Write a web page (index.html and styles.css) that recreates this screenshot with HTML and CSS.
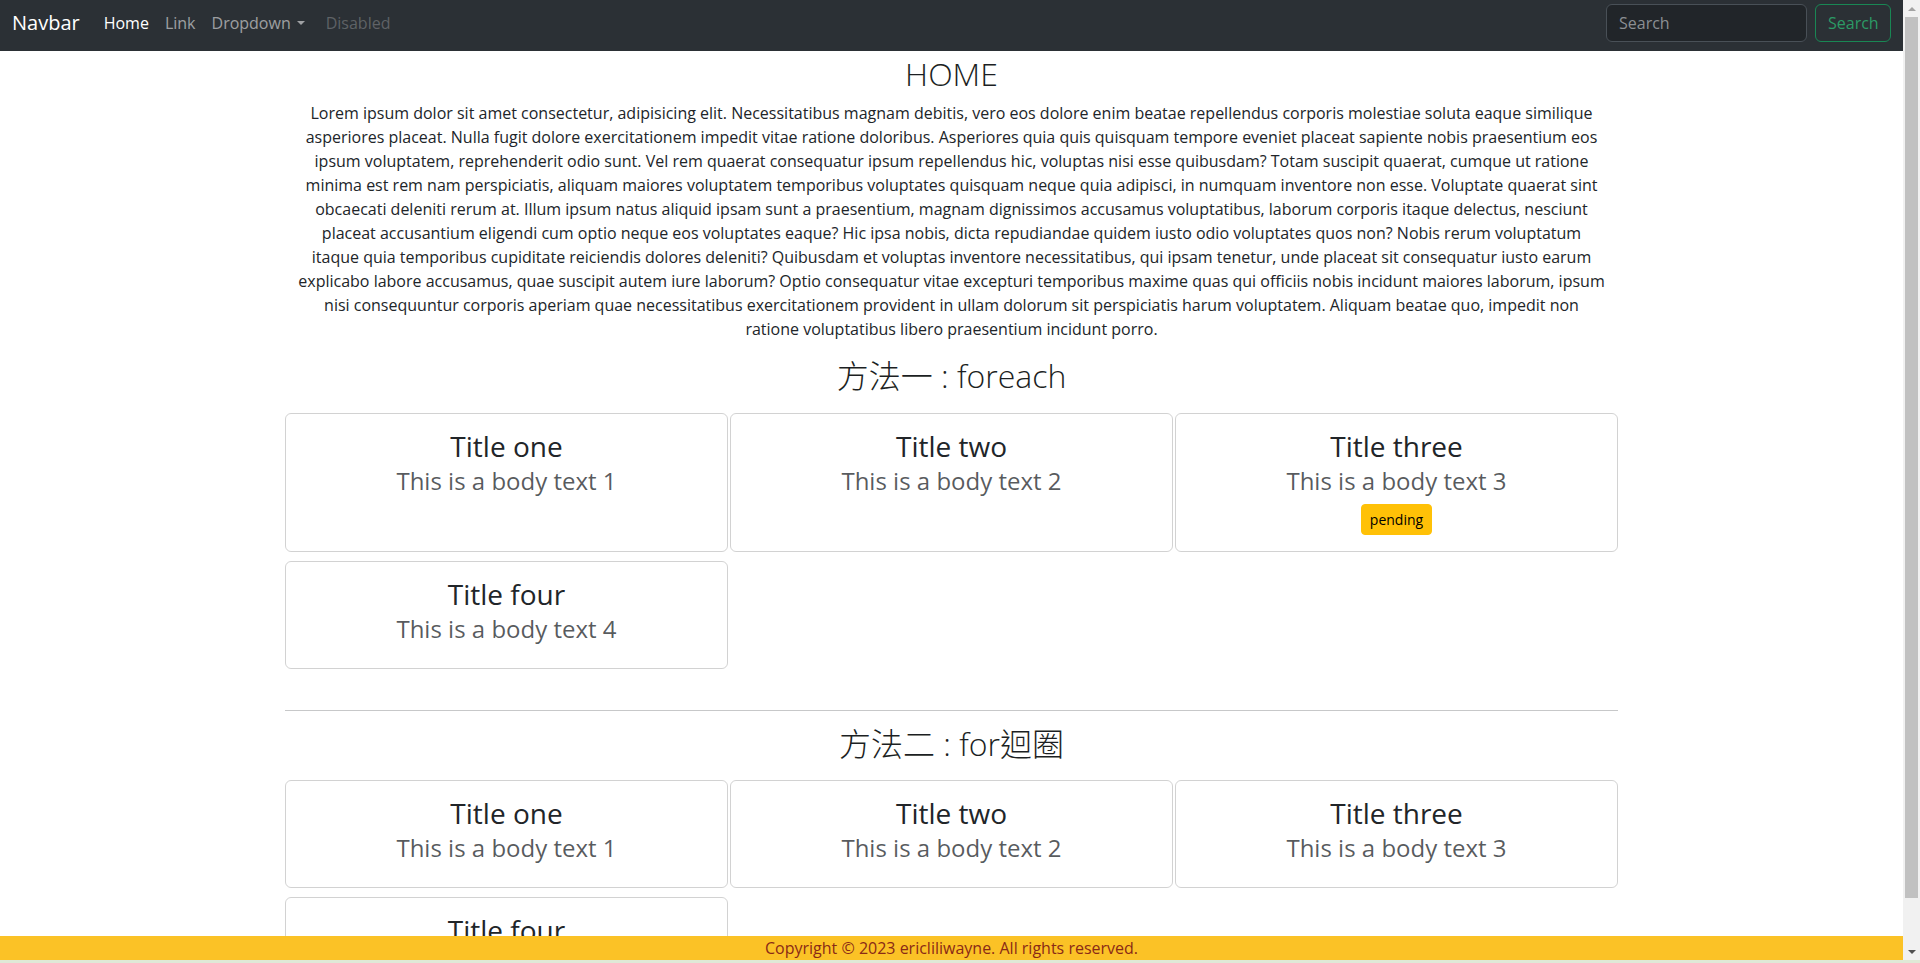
FILE: index.html
```html
<!DOCTYPE html>
<html lang="zh-Hant">
<head>
<meta charset="utf-8">
<title>Home</title>
<link rel="stylesheet" href="styles.css">
</head>
<body>
<nav class="navbar">
  <a class="brand" href="#">Navbar</a>
  <ul class="nav-links">
    <li><a class="nav-link active" href="#">Home</a></li>
    <li><a class="nav-link" href="#">Link</a></li>
    <li><a class="nav-link dropdown" href="#">Dropdown</a></li>
    <li><span class="nav-link disabled">Disabled</span></li>
  </ul>
  <form class="search">
    <input class="search-input" type="search" placeholder="Search">
    <button class="search-btn" type="button">Search</button>
  </form>
</nav>

<main class="container">
  <h2 class="page-title">HOME</h2>
  <p class="intro">Lorem ipsum dolor sit amet consectetur, adipisicing elit. Necessitatibus magnam debitis, vero eos dolore enim beatae repellendus corporis molestiae soluta eaque similique asperiores placeat. Nulla fugit dolore exercitationem impedit vitae ratione doloribus. Asperiores quia quis quisquam tempore eveniet placeat sapiente nobis praesentium eos ipsum voluptatem, reprehenderit odio sunt. Vel rem quaerat consequatur ipsum repellendus hic, voluptas nisi esse quibusdam? Totam suscipit quaerat, cumque ut ratione minima est rem nam perspiciatis, aliquam maiores voluptatem temporibus voluptates quisquam neque quia adipisci, in numquam inventore non esse. Voluptate quaerat sint obcaecati deleniti rerum at. Illum ipsum natus aliquid ipsam sunt a praesentium, magnam dignissimos accusamus voluptatibus, laborum corporis itaque delectus, nesciunt placeat accusantium eligendi cum optio neque eos voluptates eaque? Hic ipsa nobis, dicta repudiandae quidem iusto odio voluptates quos non? Nobis rerum voluptatum itaque quia temporibus cupiditate reiciendis dolores deleniti? Quibusdam et voluptas inventore necessitatibus, qui ipsam tenetur, unde placeat sit consequatur iusto earum explicabo labore accusamus, quae suscipit autem iure laborum? Optio consequatur vitae excepturi temporibus maxime quas qui officiis nobis incidunt maiores laborum, ipsum nisi consequuntur corporis aperiam quae necessitatibus exercitationem provident in ullam dolorum sit perspiciatis harum voluptatem. Aliquam beatae quo, impedit non ratione voluptatibus libero praesentium incidunt porro.</p>

  <h2 class="section-title">方法一 : foreach</h2>
  <div class="card-grid">
    <div class="card"><h3 class="card-title">Title one</h3><p class="card-text">This is a body text 1</p></div>
    <div class="card"><h3 class="card-title">Title two</h3><p class="card-text">This is a body text 2</p></div>
    <div class="card"><h3 class="card-title">Title three</h3><p class="card-text">This is a body text 3</p><span class="badge-btn">pending</span></div>
    <div class="card"><h3 class="card-title">Title four</h3><p class="card-text">This is a body text 4</p></div>
  </div>

  <hr class="divider">

  <h2 class="section-title">方法二 : for迴圈</h2>
  <div class="card-grid">
    <div class="card"><h3 class="card-title">Title one</h3><p class="card-text">This is a body text 1</p></div>
    <div class="card"><h3 class="card-title">Title two</h3><p class="card-text">This is a body text 2</p></div>
    <div class="card"><h3 class="card-title">Title three</h3><p class="card-text">This is a body text 3</p></div>
    <div class="card"><h3 class="card-title">Title four</h3><p class="card-text">This is a body text 4</p></div>
  </div>
</main>

<footer class="footer">Copyright © 2023 ericliliwayne. All rights reserved.</footer>

<div class="scrollbar" aria-hidden="true">
  <span class="sb-arrow sb-up"></span>
  <span class="sb-thumb"></span>
  <span class="sb-track"></span>
  <span class="sb-arrow sb-down"></span>
</div>
<div class="window-edge" aria-hidden="true"></div>
</body>
</html>
```

FILE: styles.css
```css
html {
  overflow: hidden;
}

body {
  width: 1903px;
  margin: 0;
  font-family: "Open Sans", "Noto Sans CJK TC", sans-serif;
  font-size: 16px;
  line-height: 1.5;
  color: #212529;
  background: #fff;
}

/* ---------- navbar ---------- */
.navbar {
  display: flex;
  align-items: center;
  height: 51px;
  padding: 4px 12px 9px;
  box-sizing: border-box;
  background: #2b3035;
}

.brand {
  font-size: 20px;
  line-height: 30px;
  color: #fff;
  text-decoration: none;
  margin-right: 16px;
}

.nav-links {
  display: flex;
  flex: 1;
  list-style: none;
  margin: 0;
  padding: 0;
}

.nav-link {
  display: block;
  padding: 8px;
  color: rgba(255, 255, 255, 0.55);
  text-decoration: none;
}

.nav-link.active {
  color: #fff;
}

.nav-link.disabled {
  margin-left: 5px;
  color: rgba(255, 255, 255, 0.25);
}

.dropdown::after {
  content: "";
  display: inline-block;
  margin-left: 6px;
  vertical-align: 0.255em;
  border-top: 0.3em solid;
  border-right: 0.3em solid transparent;
  border-left: 0.3em solid transparent;
  border-bottom: 0;
}

.search {
  display: flex;
  gap: 8px;
}

.search-input {
  width: 201px;
  height: 38px;
  box-sizing: border-box;
  padding: 6px 12px;
  font: inherit;
  color: #dee2e6;
  background: #212529;
  border: 1px solid #495057;
  border-radius: 6px;
}

.search-input::placeholder {
  color: #8b8f93;
}

.search-btn {
  width: 76px;
  height: 38px;
  box-sizing: border-box;
  padding: 6px 12px;
  font: inherit;
  color: #2b9a66;
  background: transparent;
  border: 1px solid #198754;
  border-radius: 6px;
}

/* ---------- content ---------- */
.container {
  width: 1335px;
  margin: 0 auto;
  padding-top: 4px;
  text-align: center;
}

.page-title,
.section-title {
  margin: 0 0 8px;
  font-size: 32px;
  font-weight: 300;
  line-height: 1.2;
  color: #1c1f23;
}

.intro {
  max-width: 1308px;
  margin: 0 auto 16px;
}

.card-grid {
  display: grid;
  grid-template-columns: repeat(3, 1fr);
  column-gap: 2px;
  row-gap: 9px;
  padding: 9px 1px 25px;
}

.card {
  display: flex;
  flex-direction: column;
  align-items: center;
  padding: 15px 16px 16px;
  border: 1px solid rgba(0, 0, 0, 0.175);
  border-radius: 6px;
}

.card-title {
  margin: 0;
  font-size: 28px;
  font-weight: 400;
  line-height: 34px;
}

.card-text {
  margin: 0 0 6px;
  font-size: 24px;
  font-weight: 400;
  line-height: 35px;
  color: rgba(33, 37, 41, 0.75);
}

.badge-btn {
  display: inline-block;
  padding: 4px 8px;
  font-size: 14px;
  line-height: 21px;
  color: #000;
  background: #ffc107;
  border: 1px solid #ffc107;
  border-radius: 4px;
}

.divider {
  margin: 16px 1px 14px;
  border: 0;
  border-top: 1px solid rgba(33, 37, 41, 0.25);
}

/* ---------- footer ---------- */
.footer {
  position: fixed;
  left: 0;
  bottom: 3px;
  width: 1903px;
  text-align: center;
  line-height: 24px;
  color: #8a2a16;
  background: #fbc226;
}

/* ---------- window chrome ---------- */
.scrollbar {
  position: fixed;
  top: 0;
  right: 0;
  width: 17px;
  height: 960px;
  display: flex;
  flex-direction: column;
  background: #f1f1f1;
}

.sb-arrow {
  flex: none;
  height: 17px;
  display: flex;
  align-items: center;
  justify-content: center;
}

.sb-arrow::before {
  content: "";
  border-left: 4px solid transparent;
  border-right: 4px solid transparent;
}

.sb-up::before {
  border-bottom: 4px solid #a3a3a3;
}

.sb-down::before {
  border-top: 4px solid #505050;
}

.sb-thumb {
  flex: none;
  height: 881px;
  margin: 0 2px;
  background: #c1c1c1;
}

.sb-track {
  flex: 1;
}

.window-edge {
  position: fixed;
  left: 0;
  right: 0;
  bottom: 0;
  height: 3px;
  background: #dfe9d6;
}
```
